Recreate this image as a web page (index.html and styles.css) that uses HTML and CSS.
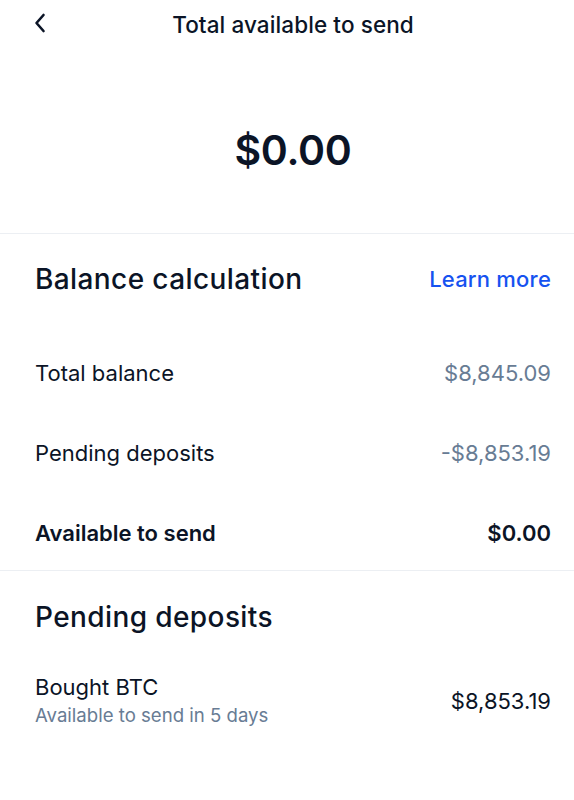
FILE: index.html
```html
<!DOCTYPE html>
<html lang="en">
<head>
<meta charset="utf-8">
<title>Total available to send</title>
<link rel="stylesheet" href="styles.css">
</head>
<body>
<div class="screen">
  <header class="topbar">
    <span class="back" aria-label="Back">
      <svg width="14" height="22" viewBox="0 0 14 22"><path d="M10.5 3 L3.5 11 L10.5 19" fill="none" stroke="#0b1426" stroke-width="2.6" stroke-linecap="round" stroke-linejoin="round"/></svg>
    </span>
    <h1 class="title">Total available to send</h1>
  </header>

  <section class="hero">
    <div class="amount">$0.00</div>
  </section>

  <section class="balance">
    <div class="section-head">
      <h2 class="section-title">Balance calculation</h2>
      <a class="link">Learn more</a>
    </div>
    <div class="rows">
      <div class="row"><span>Total balance</span><span class="muted">$8,845.09</span></div>
      <div class="row"><span>Pending deposits</span><span class="muted">-$8,853.19</span></div>
      <div class="row strong"><span>Available to send</span><span>$0.00</span></div>
    </div>
  </section>

  <section class="pending">
    <div class="section-head">
      <h2 class="section-title">Pending deposits</h2>
    </div>
    <div class="item">
      <div class="item-text">
        <div class="item-name">Bought BTC</div>
        <div class="item-sub">Available to send in 5 days</div>
      </div>
      <div class="item-value">$8,853.19</div>
    </div>
  </section>
</div>
</body>
</html>
```

FILE: styles.css
```css
* { box-sizing: border-box; }
html, body { margin: 0; padding: 0; background: #ffffff; }
body {
  font-family: Inter, "Noto Sans", "Liberation Sans", sans-serif;
  color: #0b1426;
  width: 574px;
}
.screen { width: 574px; }

.topbar {
  height: 48px;
  padding-left: 12px;
  display: flex;
  align-items: center;
  justify-content: center;
  position: relative;
}
.back {
  position: absolute;
  left: 33px;
  top: 12px;
  width: 14px;
  height: 22px;
  display: flex;
}
.title {
  margin: 0;
  font-size: 22.5px;
  font-weight: 500;
  letter-spacing: 0.1px;
}

.hero {
  height: 186px;
  padding-top: 18px;
  padding-left: 12px;
  display: flex;
  align-items: center;
  justify-content: center;
  border-bottom: 1px solid #eceff3;
}
.amount {
  font-size: 41px;
  font-weight: 600;
  letter-spacing: -0.3px;
}

.balance {
  padding: 0 23px 0 35px;
  border-bottom: 1px solid #eceff3;
}
.section-head {
  height: 90px;
  display: flex;
  align-items: center;
  justify-content: space-between;
}
.section-title {
  margin: 0;
  font-size: 28px;
  font-weight: 500;
  letter-spacing: 0.4px;
}
.link {
  color: #1652f0;
  font-size: 22px;
  font-weight: 500;
  letter-spacing: 0.2px;
}
.rows {
  margin-top: 12px;
  display: flex;
  flex-direction: column;
  gap: 6px;
}
.row {
  height: 74px;
  display: flex;
  align-items: center;
  justify-content: space-between;
  font-size: 22px;
  font-weight: 400;
}
.muted { color: #687c94; }
.row.strong { font-weight: 600; }

.pending {
  padding: 0 23px 0 35px;
}
.pending .section-head { height: 92px; }
.item {
  margin-top: 11px;
  display: flex;
  align-items: center;
  justify-content: space-between;
}
.item-name {
  font-size: 22px;
  line-height: 26px;
}
.item-sub {
  margin-top: 2px;
  font-size: 18.6px;
  line-height: 26px;
  color: #687c94;
}
.item-value {
  font-size: 22px;
}
```
